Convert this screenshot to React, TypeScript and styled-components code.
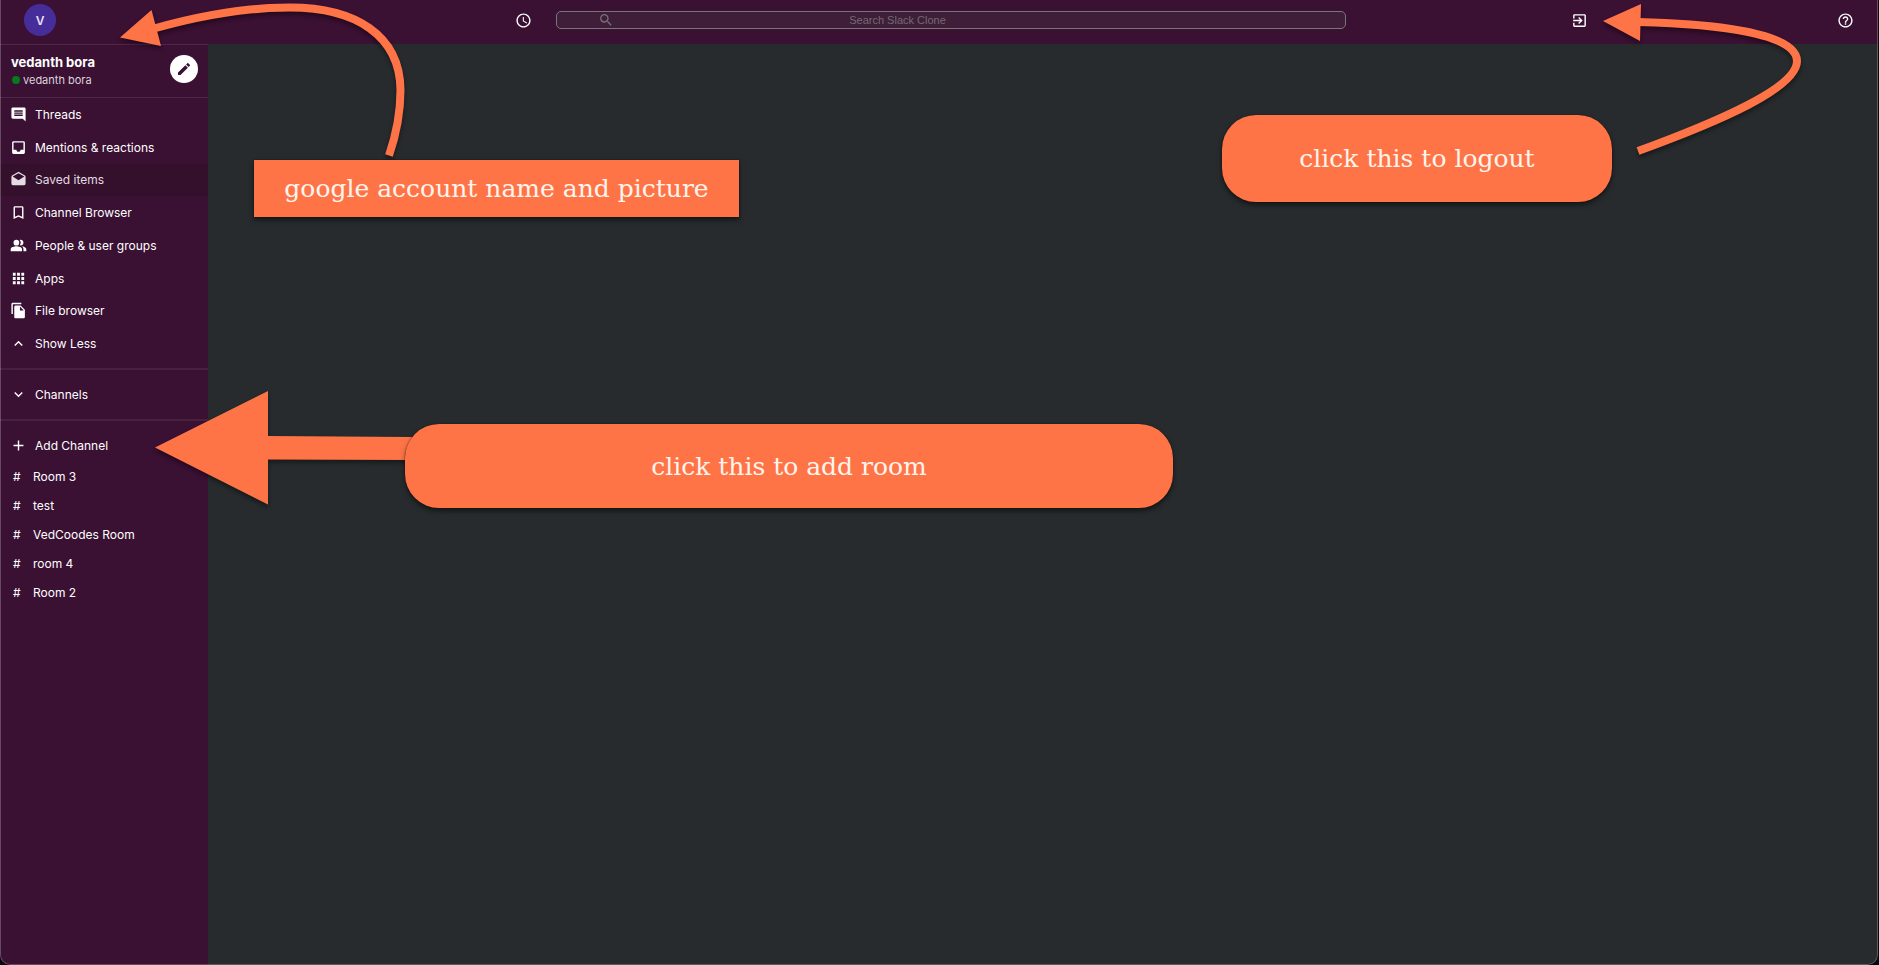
import React from "react";
import styled, { createGlobalStyle } from "styled-components";
import {
  MdAccessTime,
  MdAdd,
  MdApps,
  MdBookmarkBorder,
  MdCreate,
  MdDrafts,
  MdExitToApp,
  MdExpandLess,
  MdExpandMore,
  MdFileCopy,
  MdHelpOutline,
  MdInbox,
  MdInsertComment,
  MdPeopleAlt,
  MdSearch,
} from "react-icons/md";
import type { IconType } from "react-icons";

const purple = "#3a1033";
const charcoal = "#272b2d";
const orange = "#ff7447";
const line = "#4e2848";

const GlobalStyle = createGlobalStyle`
  * { box-sizing: border-box; }
  body {
    margin: 0;
    background: #05090c;
    font-family: Inter, "Liberation Sans", sans-serif;
    color: #fff;
  }
  button {
    font: inherit;
    color: inherit;
    background: none;
    border: 0;
    padding: 0;
    cursor: pointer;
  }
`;

const Window = styled.div`
  position: relative;
  display: flex;
  flex-direction: column;
  min-height: 100vh;
  margin-right: 1px;
  overflow: hidden;
  background: ${charcoal};
  border-radius: 0 0 10px 10px;

  &::after {
    content: "";
    position: absolute;
    inset: 0;
    border: 1px solid rgba(255, 255, 255, 0.24);
    border-top: 0;
    border-radius: 0 0 10px 10px;
    pointer-events: none;
  }
`;

const Header = styled.header`
  display: grid;
  grid-template-columns: 556fr 790fr 532fr;
  height: 44px;
  padding-bottom: 4px;
  align-items: center;
  background: ${purple};
`;

const HeaderLeft = styled.div`
  display: flex;
  align-items: center;
  justify-content: space-between;
  padding: 0 24px;
`;

const HeaderRight = styled.div`
  display: grid;
  grid-template-columns: 242fr 266fr;
  align-items: center;
  justify-items: end;
  padding-right: 24px;
`;

const Avatar = styled.button`
  width: 32px;
  height: 32px;
  border-radius: 50%;
  background: #472d99;
  color: #e6e0f5;
  font-size: 12px;
  font-weight: 600;
`;

const IconButton = styled.button`
  display: flex;
  font-size: 17px;
`;

const SearchBox = styled.label`
  display: grid;
  grid-template-columns: 51fr 567fr 158fr;
  align-items: center;
  height: 18px;
  padding: 0 6px;
  border: 1px solid #7b7479;
  border-radius: 5px;
  background: #3e1e38;
  color: #777076;
  font-size: 16px;

  svg { justify-self: end; }
`;

const SearchInput = styled.input`
  min-width: 0;
  padding: 0;
  border: 0;
  outline: 0;
  background: transparent;
  color: #fff;
  font: 11px "Liberation Sans", Arial, sans-serif;
  text-align: center;

  &::placeholder { color: #746b72; opacity: 1; }
`;

const Body = styled.div`
  display: flex;
  flex: 1;
`;

const Sidebar = styled.aside`
  flex: 0 0 208px;
  background: ${purple};
`;

const Main = styled.main`
  flex: 1;
`;

const Profile = styled.div`
  display: flex;
  align-items: center;
  justify-content: space-between;
  height: 54px;
  padding: 0 10px 4px 11px;
  border: solid ${line};
  border-width: 1px 0;
`;

const Identity = styled.div`
  padding-top: 4px;
`;

const Name = styled.h2`
  margin: 0;
  font-size: 13px;
  line-height: 18px;
  font-weight: 700;
`;

const Status = styled.p`
  display: flex;
  align-items: center;
  gap: 3px;
  margin: 0;
  font-size: 11px;
  line-height: 18px;
  color: #ddd3dc;

  &::before {
    content: "";
    width: 8px;
    height: 8px;
    margin-left: 1px;
    border-radius: 50%;
    background: #057a1c;
  }
`;

const Compose = styled.button`
  display: grid;
  place-items: center;
  width: 28px;
  height: 28px;
  border-radius: 50%;
  background: #fff;
  color: ${purple};
  font-size: 16px;
`;

const Menu = styled.nav`
  display: grid;
  grid-auto-rows: 1fr;
  height: 262px;
`;

const Option = styled.button<{ $active?: boolean }>`
  display: flex;
  align-items: center;
  gap: 8px;
  width: 100%;
  min-height: 32px;
  padding: 0 10px;
  background: ${(p) => (p.$active ? "#34102d" : "transparent")};
  color: ${(p) => (p.$active ? "#e4dbe3" : "#fff")};
  font-size: 12px;
  font-weight: 400;
  text-align: left;

  svg { font-size: 17px; }
`;

const Section = styled.div`
  display: grid;
  grid-auto-rows: 33px;
  padding-top: 8px;
  border-top: 2px solid #46223f;
  margin-top: 8px;
`;

const Rooms = styled.div`
  display: grid;
  grid-auto-rows: 29px;
`;

const Room = styled.button`
  display: flex;
  align-items: center;
  gap: 12px;
  padding: 0 13px;
  font-size: 12px;
  font-weight: 400;
  text-align: left;

  &::before { content: "#"; width: 8px; }
`;

/* Notes pinned on top of the window */
const Note = styled.div<{ $x: number; $y: number; $w: number; $h: number; $round?: boolean }>`
  position: absolute;
  left: ${(p) => p.$x}px;
  top: ${(p) => p.$y}px;
  width: ${(p) => p.$w}px;
  height: ${(p) => p.$h}px;
  display: grid;
  place-items: center;
  border-radius: ${(p) => (p.$round ? 34 : 0)}px;
  background: ${orange};
  box-shadow: 0 3px 5px rgba(0, 0, 0, 0.5), 0 0 1px rgba(0, 0, 0, 0.8);
  color: #fff4ee;
  font-family: "DejaVu Serif", serif;
  font-size: 25px;
  white-space: nowrap;
`;

const Arrows = styled.svg`
  position: absolute;
  left: 0;
  top: 0;
  pointer-events: none;
  filter: drop-shadow(0 3px 2px rgba(0, 0, 0, 0.4));
`;

const menu: { icon: IconType; label: string; active?: boolean }[] = [
  { icon: MdInsertComment, label: "Threads" },
  { icon: MdInbox, label: "Mentions & reactions" },
  { icon: MdDrafts, label: "Saved items", active: true },
  { icon: MdBookmarkBorder, label: "Channel Browser" },
  { icon: MdPeopleAlt, label: "People & user groups" },
  { icon: MdApps, label: "Apps" },
  { icon: MdFileCopy, label: "File browser" },
  { icon: MdExpandLess, label: "Show Less" },
];

const rooms = ["Room 3", "test", "VedCoodes Room", "room 4", "Room 2"];

export default function App() {
  return (
    <>
      <GlobalStyle />
      <Window>
        <Header>
          <HeaderLeft>
            <Avatar aria-label="Account">V</Avatar>
            <IconButton aria-label="History"><MdAccessTime /></IconButton>
          </HeaderLeft>
          <SearchBox>
            <MdSearch />
            <SearchInput placeholder="Search Slack Clone" aria-label="Search" />
          </SearchBox>
          <HeaderRight>
            <IconButton aria-label="Log out"><MdExitToApp /></IconButton>
            <IconButton aria-label="Help"><MdHelpOutline /></IconButton>
          </HeaderRight>
        </Header>
        <Body>
          <Sidebar>
            <Profile>
              <Identity>
                <Name>vedanth bora</Name>
                <Status>vedanth bora</Status>
              </Identity>
              <Compose aria-label="New message"><MdCreate /></Compose>
            </Profile>
            <Menu>
              {menu.map(({ icon: Icon, label, active }) => (
                <Option key={label} $active={active}><Icon />{label}</Option>
              ))}
            </Menu>
            <Section>
              <Option><MdExpandMore />Channels</Option>
            </Section>
            <Section>
              <Option><MdAdd />Add Channel</Option>
            </Section>
            <Rooms>
              {rooms.map((room) => <Room key={room}>{room}</Room>)}
            </Rooms>
          </Sidebar>
          <Main />
        </Body>
        <Arrows width="1878" height="520" fill="none" stroke={orange} strokeWidth="8" aria-hidden="true">
          <path d="M154 28.500C205 14 250 7.500 290 7.500C355 7.500 400 35 400.500 90C400.500 115 395 138 389 155.500" />
          <path d="M120 37.500L151.500 10L161 46Z" fill={orange} stroke="none" />
          <path d="M1638 22C1720 24 1797 34 1797 61C1797 88 1720 121 1638 151" />
          <path d="M1603 21L1641 4L1640 41Z" fill={orange} stroke="none" />
          <path d="M155 447.500L268 391V436L412 437V460L268 459.500V504.500Z" fill={orange} stroke="none" />
        </Arrows>
        <Note $x={254} $y={160} $w={485} $h={57}>google account name and picture</Note>
        <Note $x={1222} $y={115} $w={390} $h={87} $round>click this to logout</Note>
        <Note $x={405} $y={424} $w={768} $h={84} $round>click this to add room</Note>
      </Window>
    </>
  );
}
